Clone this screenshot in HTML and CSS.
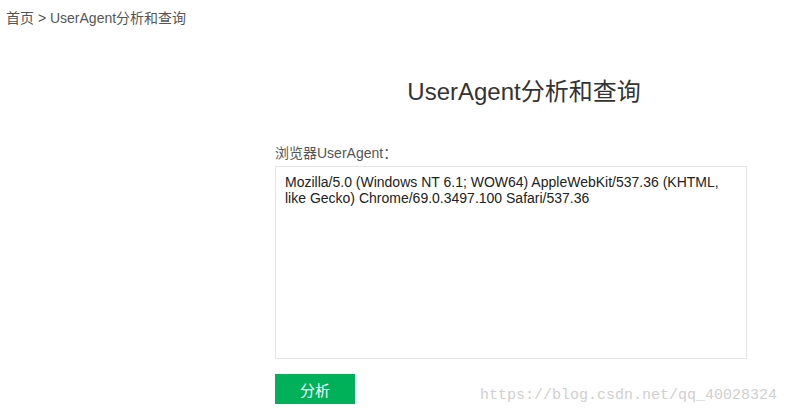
FILE: index.html
```html
<!DOCTYPE html>
<html lang="zh-CN">

<head>
    <meta charset="UTF-8">
    <title>UserAgent分析和查询</title>
    <link rel="stylesheet" href="styles.css">
</head>

<body>
    <div class="breadcrumb">首页 &gt; UserAgent分析和查询</div>

    <div class="main">
        <h1 class="title">UserAgent分析和查询</h1>
        <div class="label">浏览器UserAgent：</div>
        <textarea class="ua_box">Mozilla/5.0 (Windows NT 6.1; WOW64) AppleWebKit/537.36 (KHTML, like Gecko) Chrome/69.0.3497.100 Safari/537.36</textarea>
        <button class="btn_analyze">分析</button>
    </div>

    <div class="watermark">https://blog.csdn.net/qq_40028324</div>
</body>

</html>
```

FILE: styles.css
```css
/* 基本样式 */
body {
    font-family: Arial, "Liberation Sans", "Noto Sans CJK SC", sans-serif;
    margin: 0;
    padding: 0;
    background: #fff;
    color: #333;
    position: relative;
    height: 415px;
    overflow: hidden;
}

.breadcrumb {
    padding: 10px 6px 0;
    font-size: 14px;
    line-height: 16px;
    color: #555;
}

.main {
    width: 472px;
    margin: 0 0 0 275px;
    display: flex;
    flex-direction: column;
    align-items: flex-start;
}

.title {
    align-self: stretch;
    margin: 51px 0 0 26px;
    text-align: center;
    font-size: 24px;
    font-weight: normal;
    line-height: 30px;
    color: #333;
}

.label {
    margin-top: 38px;
    font-size: 14px;
    line-height: 16px;
    color: #555;
}

.ua_box {
    box-sizing: border-box;
    width: 472px;
    height: 193px;
    margin-top: 5px;
    padding: 7px 9px;
    border: 1px solid #e6e6e6;
    font-family: Arial, "Liberation Sans", sans-serif;
    font-size: 14px;
    line-height: 16px;
    color: #222;
    resize: none;
    outline: none;
}

.btn_analyze {
    margin-top: 15px;
    width: 80px;
    height: 30px;
    border: none;
    background: #00b15a;
    color: #fff;
    font-family: Arial, "Noto Sans CJK SC", sans-serif;
    font-size: 15px;
    cursor: pointer;
}

.watermark {
    position: absolute;
    left: 480px;
    top: 387px;
    font-family: "Liberation Mono", monospace;
    font-size: 15px;
    color: #cfcfcf;
}
```
